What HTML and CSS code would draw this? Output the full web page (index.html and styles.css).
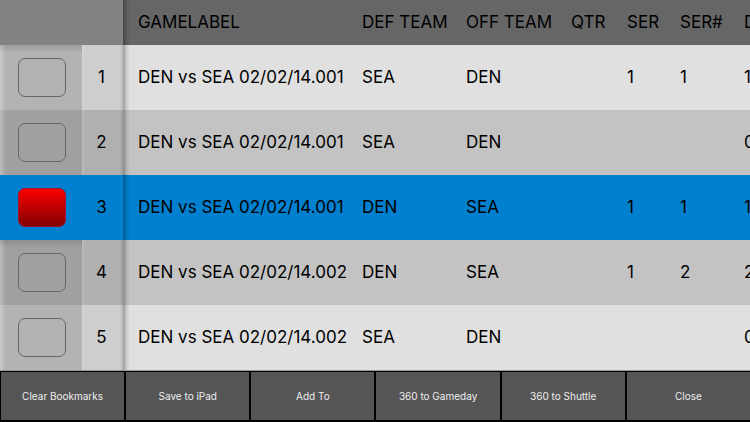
FILE: index.html
```
<!DOCTYPE html>
<html lang="en">
<head>
  <meta charset="UTF-8">
  <meta name="viewport" content="width=device-width, initial-scale=1.0">
  <title>Play List</title>
  <link rel="stylesheet" href="styles.css">
</head>
<body>
  <main class="grid-area">
    <table class="plays">
      <colgroup>
        <col class="col-mark">
        <col class="col-num">
        <col class="col-label">
        <col class="col-def">
        <col class="col-off">
        <col class="col-qtr">
        <col class="col-ser">
        <col class="col-sernum">
        <col class="col-down">
      </colgroup>
      <thead>
        <tr>
          <th class="corner" colspan="2"></th>
          <th class="label">GAMELABEL</th>
          <th>DEF TEAM</th>
          <th>OFF TEAM</th>
          <th>QTR</th>
          <th>SER</th>
          <th>SER#</th>
          <th>DN</th>
        </tr>
      </thead>
      <tbody>
        <tr>
          <td class="mark"><input type="checkbox" aria-label="Bookmark play 1"></td>
          <td class="num">1</td>
          <td class="label">DEN vs SEA 02/02/14.001</td>
          <td>SEA</td>
          <td>DEN</td>
          <td></td>
          <td>1</td>
          <td>1</td>
          <td>1</td>
        </tr>
        <tr>
          <td class="mark"><input type="checkbox" aria-label="Bookmark play 2"></td>
          <td class="num">2</td>
          <td class="label">DEN vs SEA 02/02/14.001</td>
          <td>SEA</td>
          <td>DEN</td>
          <td></td>
          <td></td>
          <td></td>
          <td>0</td>
        </tr>
        <tr class="selected">
          <td class="mark"><input type="checkbox" aria-label="Bookmark play 3" checked></td>
          <td class="num">3</td>
          <td class="label">DEN vs SEA 02/02/14.001</td>
          <td>DEN</td>
          <td>SEA</td>
          <td></td>
          <td>1</td>
          <td>1</td>
          <td>1</td>
        </tr>
        <tr>
          <td class="mark"><input type="checkbox" aria-label="Bookmark play 4"></td>
          <td class="num">4</td>
          <td class="label">DEN vs SEA 02/02/14.002</td>
          <td>DEN</td>
          <td>SEA</td>
          <td></td>
          <td>1</td>
          <td>2</td>
          <td>2</td>
        </tr>
        <tr>
          <td class="mark"><input type="checkbox" aria-label="Bookmark play 5"></td>
          <td class="num">5</td>
          <td class="label">DEN vs SEA 02/02/14.002</td>
          <td>SEA</td>
          <td>DEN</td>
          <td></td>
          <td></td>
          <td></td>
          <td>0</td>
        </tr>
      </tbody>
    </table>
  </main>

  <footer class="toolbar">
    <button type="button">Clear Bookmarks</button>
    <button type="button">Save to iPad</button>
    <button type="button">Add To</button>
    <button type="button">360 to Gameday</button>
    <button type="button">360 to Shuttle</button>
    <button type="button">Close</button>
  </footer>
</body>
</html>
```

FILE: styles.css
```
:root {
  --header-bg: #666666;
  --row-odd: #e0e0e0;
  --row-even: #c3c3c3;
  --selected: #0080cf;
  --button-bg: #555555;
}

* {
  box-sizing: border-box;
}

body {
  margin: 0;
  height: 100vh;
  display: flex;
  flex-direction: column;
  background: #000;
  color: #000;
  font-family: Inter, "Liberation Sans", sans-serif;
  font-size: 17px;
}

/* play list, scrolls sideways */
.grid-area {
  flex: 1;
  min-height: 0;
  overflow: auto;
  scrollbar-width: none;
  background: var(--row-odd);
}

.plays {
  table-layout: fixed;
  width: 824px;
  min-width: 100%;
  border-collapse: collapse;
}

.col-mark { width: 82px; }
.col-num { width: 41px; }
.col-label { width: 239px; }
.col-def { width: 104px; }
.col-off { width: 105px; }
.col-qtr { width: 56px; }
.col-ser { width: 53px; }
.col-sernum { width: 64px; }
.col-down { width: 80px; }

th,
td {
  padding: 0 0 2px;
  text-align: left;
  font-weight: 400;
  white-space: nowrap;
}

th {
  height: 45px;
  background-color: var(--header-bg);
}

td {
  height: 65px;
  background-color: var(--row-odd);
}

tr:nth-child(even) td {
  background-color: var(--row-even);
}

.label {
  padding-left: 15px;
  background-image: linear-gradient(to right, rgba(0, 0, 0, 0.3), rgba(0, 0, 0, 0.08) 4px, transparent 7px);
  background-repeat: no-repeat;
}

th.corner {
  background-color: #828282;
}

td.mark {
  padding: 0 0 0 18px;
  background-color: #b3b3b3;
  background-image: linear-gradient(to right, rgba(255, 255, 255, 0.3), transparent 6px);
}

tr:nth-child(even) td.mark {
  background-color: #a0a0a0;
}

td.num {
  padding-right: 2px;
  text-align: center;
  background-color: #cecece;
  background-image: linear-gradient(to right, rgba(255, 255, 255, 0.15), transparent 3px, transparent 38px, rgba(0, 0, 0, 0.12));
}

tr:nth-child(even) td.num {
  background-color: #b0b0b0;
}

tbody tr.selected td {
  background-color: var(--selected);
}

tbody tr.selected td.mark,
tbody tr.selected td.num {
  background-image: none;
}

/* soft shadow below the header and below the selected row */
tbody tr:first-child td.mark,
tbody tr.selected + tr td.mark {
  background-image:
    linear-gradient(rgba(0, 0, 0, 0.12), transparent 8px),
    linear-gradient(to right, rgba(255, 255, 255, 0.3), transparent 6px);
}

.mark input {
  appearance: none;
  display: block;
  width: 48px;
  height: 39px;
  margin: 0;
  border: 1px solid #666;
  border-radius: 7px;
  cursor: pointer;
}

.mark input:checked {
  border-color: #a01030;
  background: linear-gradient(#ff0000, #800000) border-box;
}

/* bottom bar */
.toolbar {
  display: grid;
  grid-template-columns: repeat(6, 1fr);
  gap: 2px;
  padding: 1px 0 2px 1px;
  border-top: 1px solid #999;
}

.toolbar button {
  height: 48px;
  padding: 0;
  border: none;
  background: var(--button-bg);
  color: #eee;
  font-family: inherit;
  font-size: 10px;
  cursor: pointer;
}

.toolbar button:active {
  background: #444;
}
```
